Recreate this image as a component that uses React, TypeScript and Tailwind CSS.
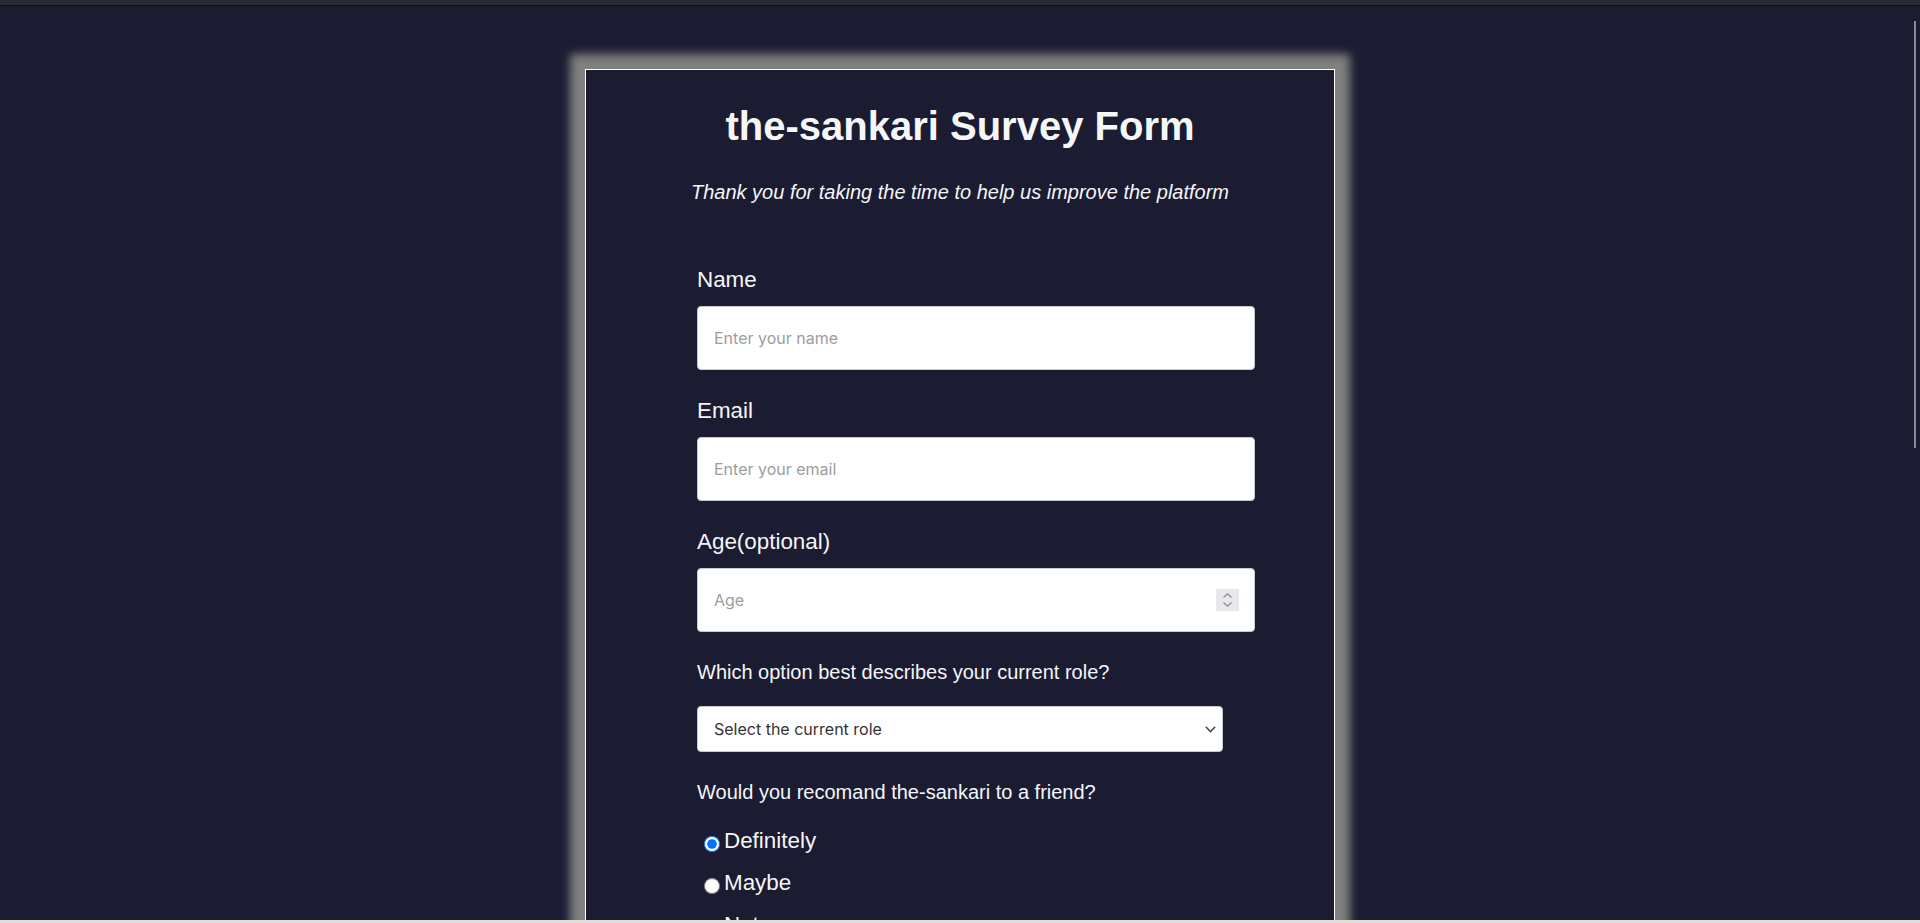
import { useState } from 'react'

const labelClass = "block text-[22.4px] leading-[26px] text-[#f5f6f7]"
const questionClass = "block text-[20px] leading-[23px] text-[#f5f6f7]"
const inputClass =
  "block w-[558px] h-[64px] rounded-[4px] border border-[#c9c9cf] bg-white px-4 text-[16px] text-[#333] font-['Inter',sans-serif] placeholder:text-[#9d9d9d] outline-none"

const roles = ['Student', 'Full Time Job', 'Full Time Learner', 'Prefer not to say', 'Other']
const answers = ['Definitely', 'Maybe', 'Not sure']

const App = () => {
  const [recommend, setRecommend] = useState('Definitely')

  return (
    <div className="relative h-[923px] overflow-hidden bg-[#1b1b32] font-['Liberation_Sans',Arial,sans-serif]">
      {/* browser frame strip */}
      <div className="h-[5px] bg-[#2b2a33]" />
      <div className="h-px bg-[#0d0d12]" />

      <main className="pt-[63px]">
        <div className="mx-auto w-[750px] border border-white bg-[#1b1b32] pb-16 shadow-[0_0_9px_15px_#808080]">
          <h1 className="mt-[33px] text-center text-[40px] font-bold leading-[46px] text-[#f5f6f7]">
            the-sankari Survey Form
          </h1>
          <p className="mt-[32px] text-center text-[20px] italic leading-[23px] text-[#f5f6f7]">
            Thank you for taking the time to help us improve the platform
          </p>

          <form className="mt-[63px] pl-[111px]" onSubmit={(e) => e.preventDefault()}>
            <label htmlFor="name" className={labelClass}>Name</label>
            <input id="name" type="text" placeholder="Enter your name" className={`mt-[13px] ${inputClass}`} />

            <label htmlFor="email" className={`mt-[28px] ${labelClass}`}>Email</label>
            <input id="email" type="email" placeholder="Enter your email" className={`mt-[13px] ${inputClass}`} />

            <label htmlFor="age" className={`mt-[28px] ${labelClass}`}>Age(optional)</label>
            <div className="relative mt-[13px] w-[558px]">
              <input id="age" type="text" placeholder="Age" className={inputClass} />
              {/* number spinner */}
              <div className="absolute right-[16px] top-[21px] flex h-[22px] w-[23px] flex-col items-center justify-center gap-[4px] bg-[#e8e8ed]">
                <svg width="9" height="5" viewBox="0 0 9 5" fill="none" stroke="#8e8e9c" strokeWidth="1.3">
                  <polyline points="0.5,4.5 4.5,0.8 8.5,4.5" />
                </svg>
                <svg width="9" height="5" viewBox="0 0 9 5" fill="none" stroke="#8e8e9c" strokeWidth="1.3">
                  <polyline points="0.5,0.5 4.5,4.2 8.5,0.5" />
                </svg>
              </div>
            </div>

            <label htmlFor="role" className={`mt-[29px] ${questionClass}`}>
              Which option best describes your current role?
            </label>
            <div className="relative mt-[22px] w-[526px]">
              <select
                id="role"
                defaultValue=""
                className="block h-[46px] w-[526px] appearance-none rounded-[4px] border border-[#c9c9cf] bg-white pl-4 font-['Inter',sans-serif] text-[16px] text-[#333] outline-none"
              >
                <option value="" disabled>Select the current role</option>
                {roles.map((r) => (
                  <option key={r} value={r}>{r}</option>
                ))}
              </select>
              <svg
                className="pointer-events-none absolute right-[7px] top-[20px]"
                width="11"
                height="7"
                viewBox="0 0 11 7"
                fill="none"
                stroke="#4a4a4a"
                strokeWidth="1.5"
              >
                <polyline points="0.8,0.8 5.5,5.6 10.2,0.8" />
              </svg>
            </div>

            <p className={`mt-[29px] ${questionClass}`}>Would you recomand the-sankari to a friend?</p>
            <div className="mt-[24px] flex flex-col gap-[16px]">
              {answers.map((a) => (
                <label key={a} className="flex items-start text-[22.4px] leading-[26px] text-[#f5f6f7]">
                  <input
                    type="radio"
                    name="recommend"
                    value={a}
                    checked={recommend === a}
                    onChange={() => setRecommend(a)}
                    className="ml-[7px] mr-[4px] mt-[8px] h-[16px] w-[16px]"
                  />
                  {a}
                </label>
              ))}
            </div>

            <p className={`mt-[29px] ${questionClass}`}>What would you like to see improved?</p>
            <div className="mt-[20px] flex flex-col gap-[12px]">
              {['Front-end Projects', 'Back-end Projects', 'Data Visualization', 'Challenges'].map((c) => (
                <label key={c} className="flex items-center gap-2 text-[20px] text-[#f5f6f7]">
                  <input type="checkbox" className="ml-[7px] h-[15px] w-[15px]" />
                  {c}
                </label>
              ))}
            </div>

            <p className={`mt-[29px] ${questionClass}`}>Any comments or suggestions?</p>
            <textarea
              placeholder="Enter your comment here..."
              className="mt-[16px] block h-[120px] w-[558px] rounded-[4px] border border-[#c9c9cf] bg-white p-4 font-['Inter',sans-serif] text-[16px]"
            />
            <button
              type="submit"
              className="mt-[28px] block h-[48px] w-[558px] rounded-[4px] bg-[#37af65] text-[20px] text-white"
            >
              Submit
            </button>
          </form>
        </div>
      </main>

      {/* overlay scrollbar */}
      <div className="absolute left-[1914px] top-[21px] h-[427px] w-[2px] bg-[#8a8a8f]" />
      {/* bottom frame strip */}
      <div className="absolute bottom-0 left-0 h-[3px] w-full bg-[#e2ddd5]" />
    </div>
  )
}

export default App
